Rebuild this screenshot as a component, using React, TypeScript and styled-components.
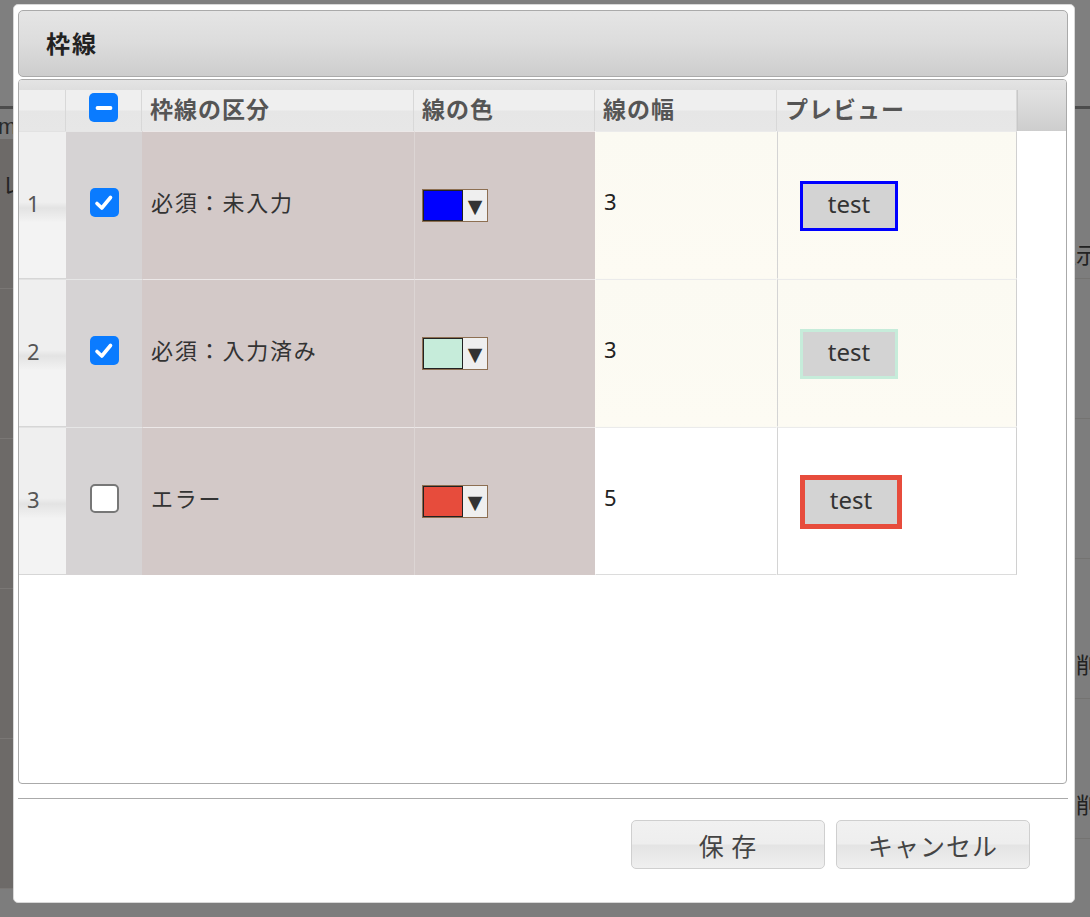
import React from "react";
import styled, { createGlobalStyle } from "styled-components";

const GlobalStyle = createGlobalStyle`
    html, body {
        margin: 0;
        padding: 0;
        background: #7d7d7d;
        font-family: "Noto Sans", "Noto Sans CJK JP", sans-serif;
    }
`;

type BorderRow = {
    no: number;
    checked: boolean;
    label: string;
    color: string;
    width: number;
    filled: boolean;
};

const rows: BorderRow[] = [
    { no: 1, checked: true, label: "必須：未入力", color: "#0000ff", width: 3, filled: true },
    { no: 2, checked: true, label: "必須：入力済み", color: "#c6ecda", width: 3, filled: true },
    { no: 3, checked: false, label: "エラー", color: "#e74c3c", width: 5, filled: false },
];

const CheckIcon = () => (
    <svg width="22" height="22" viewBox="0 0 22 22">
        <polyline
            points="4,11.5 8.8,16 17.5,5.5"
            fill="none"
            stroke="#fff"
            strokeWidth="3.6"
            strokeLinecap="round"
            strokeLinejoin="round"
        />
    </svg>
);

const MinusIcon = () => (
    <svg width="22" height="22" viewBox="0 0 22 22">
        <line x1="4.5" y1="11" x2="17.5" y2="11" stroke="#fff" strokeWidth="3.8" strokeLinecap="round" />
    </svg>
);

export default function App() {
    return (
        <>
            <GlobalStyle />
            <Page>
                <UnderTop>
                    <UnderText>m</UnderText>
                </UnderTop>
                <UnderBody>
                    <UnderSide>
                        <UnderSideItem>レ</UnderSideItem>
                        <UnderSideItem />
                        <UnderSideItem />
                        <UnderSideItem />
                        <UnderSideItem>内容</UnderSideItem>
                    </UnderSide>
                    <UnderMain>
                        <UnderMainRow $pad={98}>表示</UnderMainRow>
                        <UnderMainRow $pad={0} />
                        <UnderMainRow $pad={0} />
                        <UnderMainRow $pad={88}>削</UnderMainRow>
                        <UnderMainRow $pad={88}>削</UnderMainRow>
                    </UnderMain>
                </UnderBody>

                <Dialog>
                    <TitleBar>枠線</TitleBar>
                    <GridBox>
                        <GridTop />
                        <Grid>
                            <HeadCell />
                            <HeadCell $center>
                                <Check $checked>
                                    <MinusIcon />
                                </Check>
                            </HeadCell>
                            <HeadCell>枠線の区分</HeadCell>
                            <HeadCell>線の色</HeadCell>
                            <HeadCell>線の幅</HeadCell>
                            <HeadCell>プレビュー</HeadCell>
                            <HeadFiller />

                            {rows.map((r) => (
                                <React.Fragment key={r.no}>
                                    <RowHead>{r.no}</RowHead>
                                    <CheckCell>
                                        <Check $checked={r.checked}>{r.checked && <CheckIcon />}</Check>
                                    </CheckCell>
                                    <LockedCell>{r.label}</LockedCell>
                                    <LockedCell $soft>
                                        <ColorPicker>
                                            <Swatch style={{ background: r.color }} />
                                            <Arrow>▼</Arrow>
                                        </ColorPicker>
                                    </LockedCell>
                                    <EditCell $filled={r.filled}>{r.width}</EditCell>
                                    <EditCell $filled={r.filled} $last>
                                        <Preview style={{ border: `${r.width}px solid ${r.color}` }}>test</Preview>
                                    </EditCell>
                                    <RowFiller />
                                </React.Fragment>
                            ))}
                        </Grid>
                    </GridBox>
                    <Separator />
                    <Footer>
                        <FooterButton>保 存</FooterButton>
                        <FooterButton>キャンセル</FooterButton>
                    </Footer>
                </Dialog>
            </Page>
        </>
    );
}

const Page = styled.div`
    position: relative;
    width: 1090px;
    height: 917px;
    overflow: hidden;
    background: #7d7d7d;
`;

const UnderTop = styled.div`
    height: 106px;
    border-bottom: 3px solid #4c4c4c;
    background: #7f7f7f;
    display: flex;
    align-items: flex-end;
`;

const UnderText = styled.span`
    font-family: "Liberation Sans", sans-serif;
    font-size: 22px;
    color: #2a2a2a;
    margin: 0 0 -34px -2px;
`;

const UnderBody = styled.div`
    display: flex;
    margin-top: 30px;
`;

const UnderSide = styled.div`
    width: 330px;
    background: #6d6a68;
    display: flex;
    flex-direction: column;
`;

const UnderSideItem = styled.div`
    height: 150px;
    border-bottom: 1px solid #7a7775;
    font-size: 22px;
    color: #222;
    padding: 28px 0 0 2px;
    box-sizing: border-box;
    &:last-child {
        padding-top: 125px;
        padding-left: 22px;
    }
`;

const UnderMain = styled.div`
    flex: 1;
    display: flex;
    flex-direction: column;
`;

const UnderMainRow = styled.div<{ $pad: number }>`
    height: 140px;
    border-bottom: 1px solid #747371;
    font-size: 22px;
    color: #222;
    text-align: right;
    padding-top: ${(p) => p.$pad}px;
    box-sizing: border-box;
    margin-right: -8px;
`;

const Dialog = styled.div`
    position: absolute;
    left: 13px;
    top: 4px;
    width: 1062px;
    height: 899px;
    box-sizing: border-box;
    background: #fff;
    border-radius: 5px;
    border: 1px solid #d8d8d8;
    padding: 5px 6px 0 4px;
    display: flex;
    flex-direction: column;
`;

const TitleBar = styled.div`
    height: 67px;
    box-sizing: border-box;
    border: 1px solid #aaa;
    border-radius: 5px;
    background: linear-gradient(to bottom, #e5e5e5 0%, #dcdcdc 50%, #cdcdcd 100%);
    display: flex;
    align-items: center;
    padding: 0 0 2px 27px;
    font-size: 24px;
    letter-spacing: 2px;
    font-weight: bold;
    color: #222;
`;

const GridBox = styled.div`
    margin-top: 2px;
    height: 705px;
    width: 1049px;
    box-sizing: border-box;
    border: 1px solid #aaa;
    border-radius: 4px;
    overflow: hidden;
    background: #fff;
`;

const GridTop = styled.div`
    height: 10px;
    background: linear-gradient(to bottom, #e4e4e4, #dedede);
`;

const Grid = styled.div`
    display: grid;
    grid-template-columns: 47px 76px 272px 181px 182px 240px 1fr;
    grid-template-rows: 41px repeat(3, 148px);
`;

const HeadCell = styled.div<{ $center?: boolean }>`
    display: flex;
    align-items: center;
    justify-content: ${(p) => (p.$center ? "center" : "flex-start")};
    padding: ${(p) => (p.$center ? "0 0 6px 0" : "0 0 5px 8px")};
    background: linear-gradient(to bottom, #efefef 0%, #efefef 48%, #e6e6e6 52%, #e7e7e7 100%);
    border-right: 1px solid #d8d8d8;
    font-size: 23px;
    letter-spacing: 1px;
    font-weight: bold;
    color: #555;
    box-sizing: border-box;
`;

const HeadFiller = styled.div`
    background: linear-gradient(to bottom, #e2e2e2, #cdcdcd);
    border-left: 1px solid #c8c8c8;
`;

const RowHead = styled.div`
    display: flex;
    align-items: center;
    padding: 0 0 4px 8px;
    font-size: 22px;
    color: #555;
    background: linear-gradient(to bottom, #efefef 0%, #efefef 48%, #e3e3e3 52%, #f3f3f3 62%, #f3f3f3 100%);
    border-top: 1px solid #e2e2e2;
    border-bottom: 1px solid #d6d6d6;
    box-sizing: border-box;
`;

const CheckCell = styled.div`
    display: flex;
    align-items: center;
    justify-content: center;
    padding-bottom: 6px;
    background: #d6d3d4;
    border-top: 1px solid #e6e6e6;
    box-sizing: border-box;
`;

const Check = styled.div<{ $checked: boolean }>`
    width: 29px;
    height: 29px;
    box-sizing: border-box;
    border-radius: 5px;
    display: flex;
    align-items: center;
    justify-content: center;
    background: ${(p) => (p.$checked ? "#0a7bff" : "#fff")};
    border: ${(p) => (p.$checked ? "none" : "2px solid #777")};
`;

const LockedCell = styled.div<{ $soft?: boolean }>`
    display: flex;
    align-items: center;
    padding: 0 0 ${(p) => (p.$soft ? "4px 7px" : "10px 8px")};
    background: #d3c9c8;
    border-top: 1px solid #ece8e8;
    border-left: 1px solid ${(p) => (p.$soft ? "#dcd5d4" : "transparent")};
    font-size: 22px;
    letter-spacing: 1.8px;
    color: #333;
    box-sizing: border-box;
`;

const ColorPicker = styled.div`
    display: flex;
    width: 66px;
    height: 33px;
    box-sizing: border-box;
    border: 1px solid #8d6f52;
    background: #efefef;
    margin-top: 4px;
`;

const Swatch = styled.div`
    width: 40px;
    height: 100%;
    box-sizing: border-box;
    border: 1px solid #222;
`;

const Arrow = styled.div`
    flex: 1;
    display: flex;
    align-items: center;
    justify-content: center;
    font-family: "DejaVu Sans", sans-serif;
    font-size: 19px;
    letter-spacing: 0;
    color: #333;
`;

const EditCell = styled.div<{ $filled: boolean; $last?: boolean }>`
    display: flex;
    align-items: center;
    padding: 0 0 ${(p) => (p.$last ? "4px 22px" : "9px 8px")};
    background: ${(p) => (p.$filled ? "linear-gradient(to bottom, #fbfaf2, #fdfbf3)" : "#fff")};
    border-top: 1px solid #ebebeb;
    border-bottom: 1px solid ${(p) => (p.$filled ? "transparent" : "#dcdcdc")};
    border-left: 1px solid ${(p) => (p.$last ? "#d4d4d4" : "transparent")};
    border-right: 1px solid ${(p) => (p.$last ? "#d0d0d0" : "transparent")};
    font-size: 22px;
    color: #222;
    box-sizing: border-box;
`;

const Preview = styled.div`
    background: #d3d3d3;
    width: 92px;
    text-align: center;
    height: 44px;
    line-height: 40px;
    font-size: 24px;
    color: #333;
    margin-top: 6px;
`;

const RowFiller = styled.div`
    background: #fff;
`;

const Separator = styled.div`
    margin-top: 14px;
    height: 1px;
    width: 1050px;
    background: #aaa;
`;

const Footer = styled.div`
    display: flex;
    justify-content: flex-end;
    gap: 11px;
    padding: 21px 38px 0 0;
`;

const FooterButton = styled.button`
    width: 194px;
    height: 49px;
    border: 1px solid #cfcfcf;
    border-radius: 5px;
    background: linear-gradient(to bottom, #f1f1f1 0%, #eeeeee 48%, #e4e4e4 52%, #efefef 100%);
    font-family: "Noto Sans CJK JP", sans-serif;
    font-size: 25px;
    color: #444;
    letter-spacing: 1px;
    cursor: pointer;
`;
